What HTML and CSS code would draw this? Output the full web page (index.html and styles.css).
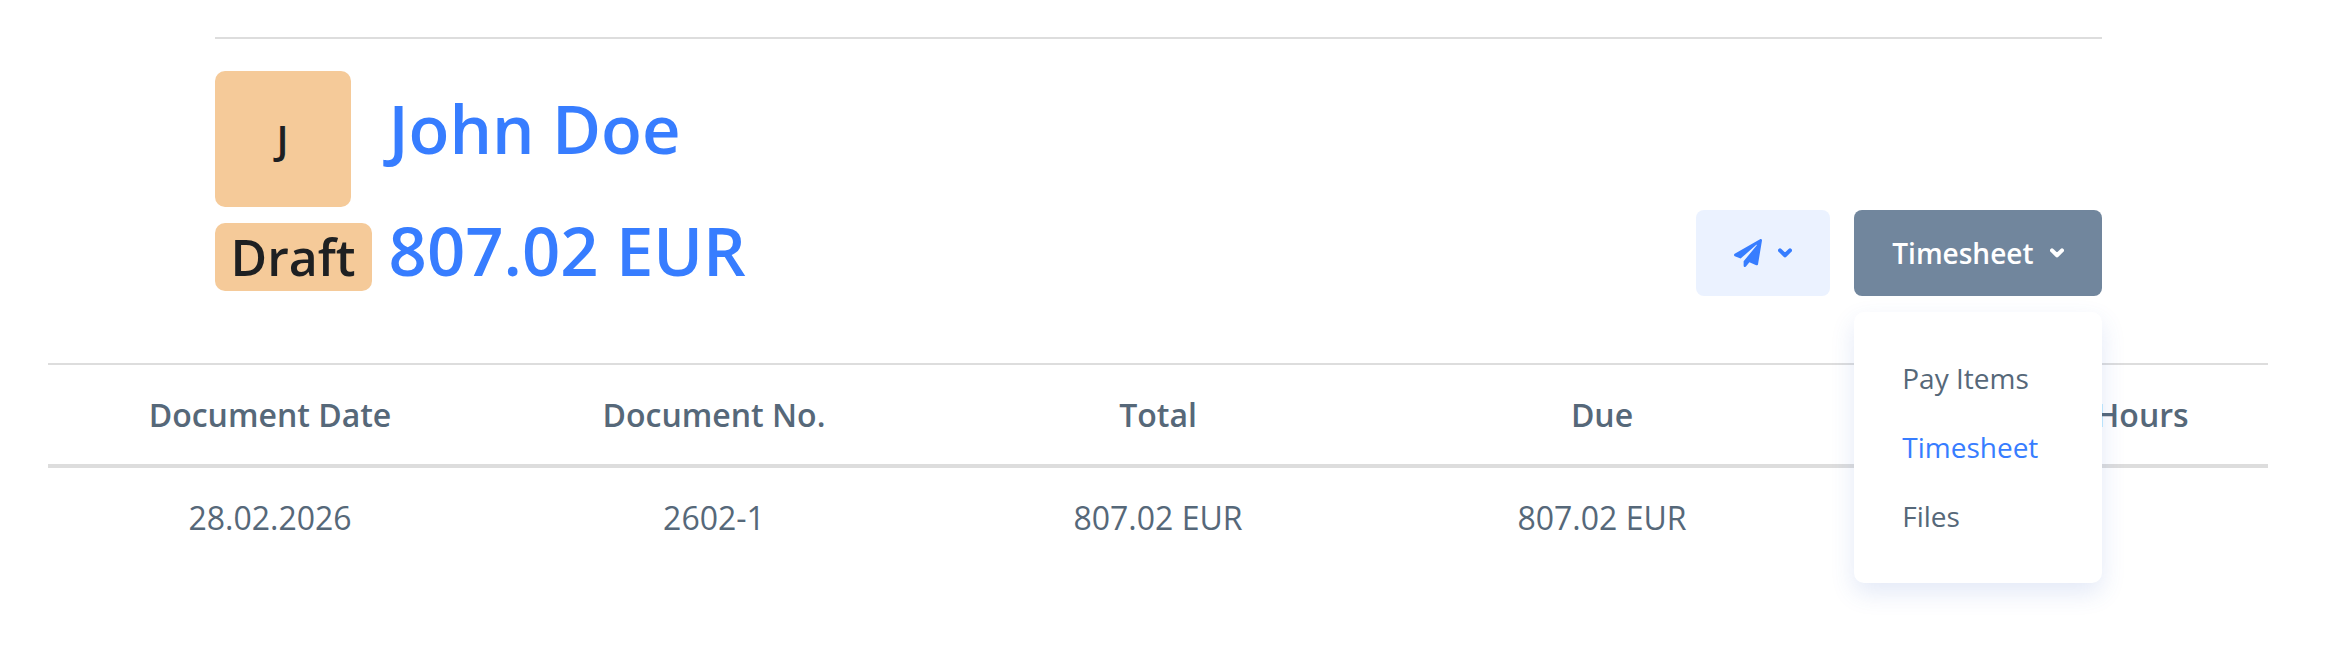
FILE: index.html
```html
<!DOCTYPE html>
<html lang="en">
<head>
    <meta charset="UTF-8">
    <meta name="viewport" content="width=device-width, initial-scale=1.0">
    <title>John Doe - Timesheet</title>
    <link rel="stylesheet" href="styles.css">
</head>
<body>
    <div class="page">
        <header class="page-header">
            <div class="summary">
                <div class="person">
                    <div class="avatar">J</div>
                    <h1 class="title">John Doe</h1>
                </div>
                <div class="amount">
                    <span class="badge">Draft</span>
                    <h1 class="title">807.02 EUR</h1>
                </div>
            </div>

            <div class="actions">
                <button type="button" class="btn btn-soft" aria-label="Send">
                    <svg class="icon-send" viewBox="0 0 512 512" fill="currentColor"><path d="M476 3.2L12.5 270.6c-18.1 10.4-15.8 35.6 2.2 43.2L121 358.4l287.3-253.2c5.5-4.9 13.3 2.6 8.6 8.3L176 407v80.5c0 23.6 28.5 32.9 42.5 15.8L282 426l124.6 52.2c14.2 6 30.4-2.9 33-18.2l72-432C515 7.8 493.3-6.8 476 3.2z"/></svg>
                    <svg class="icon-chevron" viewBox="0 0 14 10"><path d="M2 2.4l5 4.9 5-4.9"/></svg>
                </button>
                <div class="dropdown">
                    <button type="button" class="btn btn-secondary" aria-expanded="true">
                        Timesheet
                        <svg class="icon-chevron" viewBox="0 0 14 10"><path d="M2 2.4l5 4.9 5-4.9"/></svg>
                    </button>
                    <nav class="dropdown-menu">
                        <a class="dropdown-item" href="#pay-items">Pay Items</a>
                        <a class="dropdown-item active" href="#timesheet">Timesheet</a>
                        <a class="dropdown-item" href="#files">Files</a>
                    </nav>
                </div>
            </div>
        </header>

        <table class="table">
            <thead>
                <tr>
                    <th>Document Date</th>
                    <th>Document No.</th>
                    <th>Total</th>
                    <th>Due</th>
                    <th>Total Actual Hours</th>
                </tr>
            </thead>
            <tbody>
                <tr>
                    <td>28.02.2026</td>
                    <td>2602-1</td>
                    <td>807.02 EUR</td>
                    <td>807.02 EUR</td>
                    <td></td>
                </tr>
            </tbody>
        </table>
    </div>
</body>
</html>
```
FILE: styles.css
```css
* {
    box-sizing: border-box;
}
body {
    margin: 0;
    font-family: "Open Sans", sans-serif;
    font-size: 32px;
    line-height: 51px;
    color: #566879;
    background-color: #fff;
}
.page {
    min-height: 100vh;
    padding: 37px 76px 48px 48px;
}
.page-header {
    display: flex;
    justify-content: space-between;
    align-items: flex-end;
    margin: 0 7.5% 67px;
    padding-top: 32px;
    border-top: 2px solid #ddd;
}
.summary {
    padding-bottom: 5px;
}
.person {
    display: flex;
    gap: 38px;
    margin-bottom: 2px;
}
.person .title {
    padding-top: 16px;
}
.avatar {
    display: flex;
    align-items: center;
    justify-content: center;
    width: 136px;
    height: 136px;
    border-radius: 10px;
    background-color: #f5ca99;
    color: #1e2022;
    font-size: 40px;
    font-weight: 600;
}
.title {
    margin: 0;
    font-size: 67px;
    line-height: 82px;
    font-weight: 600;
    color: #377dff;
}
.amount {
    display: flex;
    align-items: baseline;
    gap: 17px;
}
.badge {
    padding: 0 16px;
    border-radius: 10px;
    background-color: #f5ca99;
    color: #1e2022;
    font-size: 50px;
    line-height: 68px;
    font-weight: 600;
}
.actions {
    display: flex;
    gap: 24px;
}
.btn {
    display: flex;
    align-items: center;
    gap: 16px;
    height: 86px;
    padding: 0 38px;
    border: none;
    border-radius: 8px;
    font-family: inherit;
    font-size: 28px;
    font-weight: 600;
    cursor: pointer;
}
.btn-soft {
    background-color: #ebf2ff;
    color: #377dff;
}
.btn-secondary {
    background-color: #71869d;
    color: #fff;
}
.icon-send {
    width: 28px;
    height: 28px;
}
.icon-chevron {
    width: 14px;
    height: 10px;
    fill: none;
    stroke: currentColor;
    stroke-width: 4;
    stroke-linecap: round;
    stroke-linejoin: round;
}
.dropdown {
    position: relative;
}
.dropdown-menu {
    position: absolute;
    top: 100%;
    left: 0;
    right: 0;
    margin-top: 16px;
    padding: 32px 0;
    border-radius: 10px;
    background-color: #fff;
    box-shadow: 0 10px 24px rgba(55, 100, 200, 0.14);
}
.dropdown-item {
    display: block;
    padding: 9px 48px;
    font-size: 28px;
    color: #566879;
    text-decoration: none;
}
.dropdown-item.active {
    color: #377dff;
}
.table {
    width: 100%;
    table-layout: fixed;
    border-collapse: separate;
    border-spacing: 0;
    text-align: center;
}
.table th,
.table td {
    padding: 24px;
}
.table th {
    font-weight: 600;
    border-top: 2px solid #ddd;
    border-bottom: 4px solid #ddd;
}
```
